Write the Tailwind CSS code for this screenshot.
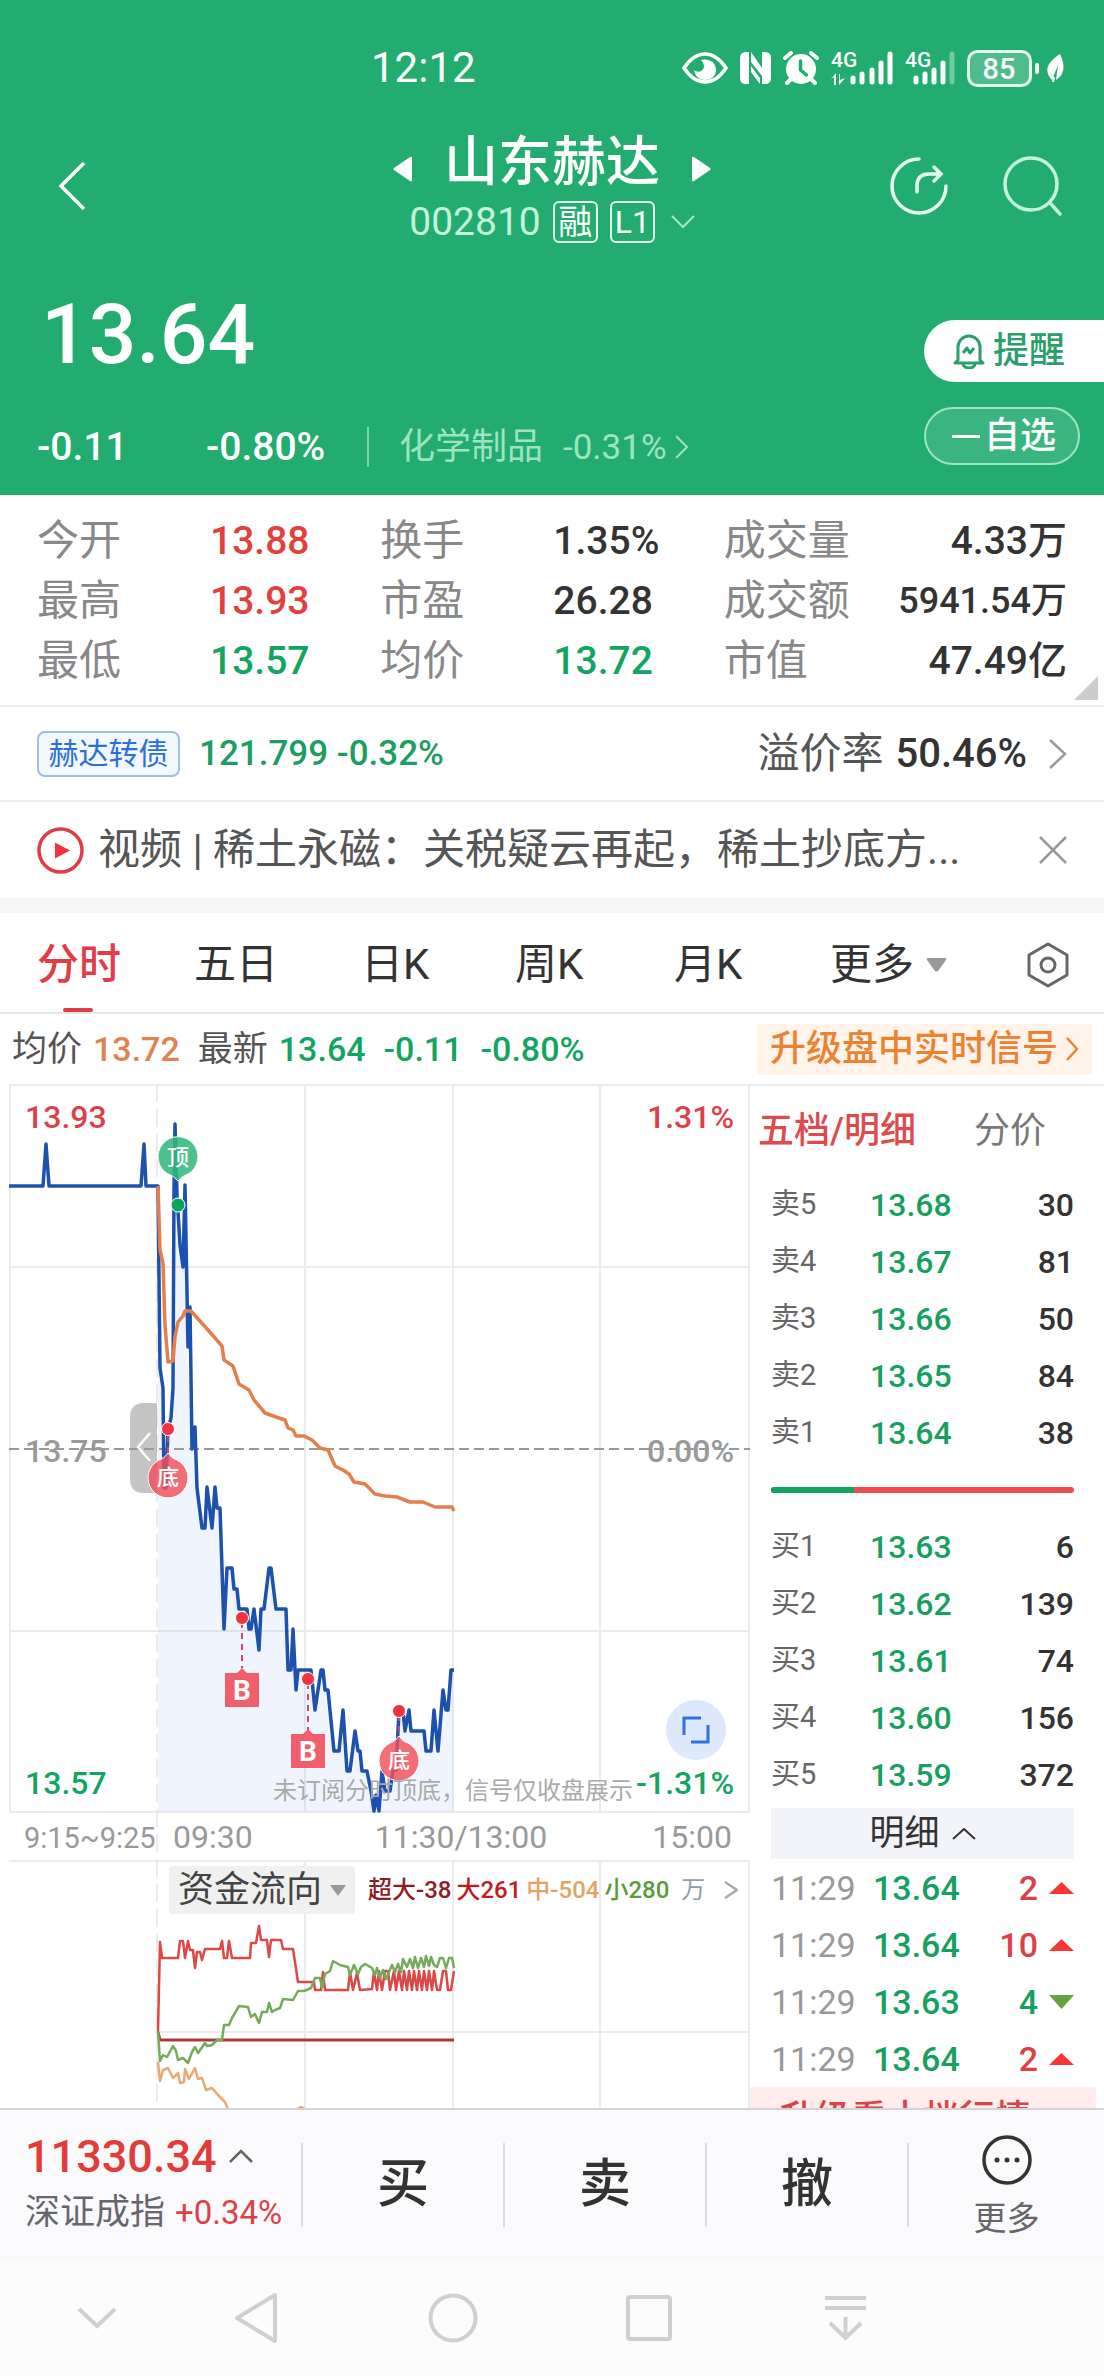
<!DOCTYPE html>
<html lang="zh-CN">
<head>
<meta charset="utf-8">
<meta name="viewport" content="width=device-width, initial-scale=1">
<title>山东赫达 002810</title>
<script src="https://cdn.jsdelivr.net/npm/@tailwindcss/browser@4"></script>
</head>
<body class="min-h-screen bg-[#fcfcfd] font-['Roboto','Noto_Sans_CJK_SC',sans-serif] leading-none text-[#333] whitespace-nowrap">

<header class="bg-[#22ac6f] text-white">
  <!-- system status -->
  <div class="flex h-[130px] items-center justify-between pt-[6px] pr-10 pl-[371px]">
    <span class="text-[42px]">12:12</span>
    <div class="flex items-center gap-3">
      <svg class="h-8 w-[46px]" viewBox="0 0 46 32" fill="none"><path d="M2 16C8 7 15 2 23 2s15 5 21 14c-6 9-13 14-21 14S8 25 2 16Z" stroke="#fff" stroke-width="3.5"/><path d="M19 8c6-2 15 1 15 10 0 6-5 10-11 10s-10-4-11-10c3 3 9 2 10-3 0-3-1-5-3-7Z" fill="#fff"/></svg>
      <svg class="h-8 w-[31px]" viewBox="0 0 31 32"><path fill="#fff" d="M6 0h3v32H6q-6 0-6-6V6q0-6 6-6ZM25 32h-3V0h3q6 0 6 6v20q0 6-6 6ZM11 0l11 16v8L11 10ZM11 14l9 12v6L11 20Z"/></svg>
      <svg class="h-[34px] w-9" viewBox="0 0 36 34" fill="none" stroke="#fff" stroke-linecap="round"><circle cx="18" cy="18" r="15" fill="#fff" stroke="none"/><path stroke-width="4" d="M2 7l6-5M34 7l-6-5M8 28l-4 4M28 28l4 4"/><path stroke="#22ac6f" stroke-width="3.5" d="M17.500 10v9l6 5"/></svg>
      <svg class="h-9 w-[62px]" viewBox="0 0 62 36" fill="#fff"><text x="0" y="17" font-size="21" font-weight="500">4G</text><path d="M3 35V27l-3 2 5-6v12ZM9 24v6l5-2-6 7V24Z"/><g stroke="#fff" stroke-width="5" stroke-linecap="round"><path d="M22 28v4M31 24v8M41 20v12M50 13v19M59 4v28"/></g></svg>
      <svg class="h-9 w-[50px]" viewBox="0 0 50 36" fill="#fff"><text x="0" y="17" font-size="21" font-weight="500">4G</text><g stroke="#fff" stroke-width="5" stroke-linecap="round"><path d="M11 28v4M20 24v8M29 20v12M38 13v19"/><path stroke="#6fcaa0" d="M47 4v28"/></g></svg>
      <svg class="h-[37px] w-[72px]" viewBox="0 0 72 37"><rect x="1.500" y="1.500" width="62" height="34" rx="9" fill="#4fbd8b" stroke="#e4f8ee" stroke-width="3"/><rect x="68" y="13" width="4" height="11" rx="2" fill="#fff"/><text x="32" y="29" text-anchor="middle" font-size="29" font-weight="500" fill="#fff">85</text></svg>
      <svg class="-ml-[5px] h-7 w-[18px]" viewBox="0 0 18 28" fill="#fff"><path d="M14 0c6 12 4 21-4 26l2-15-6 15C-2 18 0 9 14 0Z"/><path d="M7 22l-1 6h2l1-4Z"/></svg>
    </div>
  </div>

  <!-- title bar -->
  <div class="flex h-[122px] justify-between">
    <button class="flex h-[112px] w-[215px] items-center pl-[58px]" aria-label="返回"><svg class="h-12 w-7" viewBox="0 0 28 48" fill="none" stroke="#fff" stroke-width="3.500"><path d="M26 1L3 24l23 23"/></svg></button>
    <div class="flex w-[320px] flex-col items-center pt-[3px]">
      <div class="flex h-[60px] items-center gap-8">
        <button aria-label="上一只"><svg class="mt-3 h-[26px] w-[19px]" viewBox="0 0 19 26"><path fill="#fff" d="M19 2v22q0 2-2 1L1 14q-1-1 0-2L17 1q2-1 2 1Z"/></svg></button>
        <h1 class="text-[54px] font-medium">山东赫达</h1>
        <button aria-label="下一只"><svg class="mt-3 h-[26px] w-[19px]" viewBox="0 0 19 26"><path fill="#fff" d="M0 2v22q0 2 2 1l16-11q1-1 0-2L2 1q-2-1-2 1Z"/></svg></button>
      </div>
      <div class="flex h-[58px] items-center gap-3">
        <span class="text-[39px] text-[#c5f2da]">002810</span>
        <span class="flex h-[42px] w-[45px] items-center justify-center rounded-md border-2 border-[#e4f8ee] text-[34px]">融</span>
        <span class="flex h-[42px] w-[45px] items-center justify-center rounded-md border-2 border-[#e4f8ee] text-[32px]">L1</span>
        <svg class="ml-1 h-[14px] w-6" viewBox="0 0 24 14" fill="none" stroke="#a5e6c5" stroke-width="2"><path d="M1 1l11 11L23 1"/></svg>
      </div>
    </div>
    <div class="flex h-[112px] w-[215px] items-center gap-[54px]">
      <button aria-label="分享"><svg class="h-[60px] w-[60px]" viewBox="0 0 60 60" fill="none" stroke="#e8fbf1" stroke-width="3.500" stroke-linecap="round"><path d="M30 3a27 27 0 1 0 27 27M28 36v-6q0-12 12-12h12M45 11l7 7-7 7"/></svg></button>
      <button aria-label="搜索"><svg class="h-[60px] w-[60px]" viewBox="0 0 60 60" fill="none" stroke="#c5f2da" stroke-width="3.500" stroke-linecap="round"><circle cx="28" cy="28" r="26"/><path d="M48 48l9 10"/></svg></button>
    </div>
  </div>

  <!-- last price -->
  <div class="flex h-[243px] justify-between">
    <div class="pt-5 pl-[37px]">
      <div class="flex h-[126px] items-center pl-1 text-[84px] font-medium">13.64</div>
      <div class="flex h-[98px] items-center text-[39px] font-medium">
        <span class="w-[169px]">-0.11</span>
        <span class="w-[161px]">-0.80%</span>
        <span class="mr-[30px] h-10 w-[2px] bg-[#7fd3ab]"></span>
        <a href="#" class="flex items-center font-normal text-[#9de3c0]">
          <span class="mr-5 text-[36px]">化学制品</span><span class="mr-2 text-[35px]">-0.31%</span>
          <svg class="h-6 w-[14px]" viewBox="0 0 14 24" fill="none" stroke="#9de3c0" stroke-width="2"><path d="M1 1l11 11L1 23"/></svg>
        </a>
      </div>
    </div>
    <div class="flex w-[180px] flex-col gap-[25px] pt-[68px]">
      <button class="flex h-[62px] items-center gap-2 rounded-l-full bg-white pl-[29px] text-[36px] font-medium text-[#2a9f6c]">
        <svg class="h-[35px] w-8" viewBox="0 0 32 35" fill="none" stroke="#2a9f6c" stroke-width="3" stroke-linejoin="round"><path d="M5 26V13a11 11 0 0 1 22 0v13l3 3H2l3-3ZM10 30a6 4 0 0 0 12 0M10 19l4-5 3 5 4-5"/></svg>提醒</button>
      <button class="flex h-[58px] w-[156px] items-center gap-1 rounded-full border-2 border-[#9de3c0] bg-[#3bb57f] pl-[26px] text-[36px] font-medium"><span class="h-[3px] w-7 bg-white"></span>自选</button>
    </div>
  </div>
</header>

<main class="bg-white">
  <!-- key figures -->
  <section class="relative border-b-2 border-[#ececec] px-[37px] pt-4 pb-[14px]">
    <dl class="grid grid-cols-3 text-[39px] *:flex *:h-[60px] *:items-center">
      <div><dt class="w-[173px] text-[42px] text-[#888]">今开</dt><dd class="font-medium text-[#e2403c]">13.88</dd></div>
      <div><dt class="w-[173px] text-[42px] text-[#888]">换手</dt><dd class="font-medium">1.35%</dd></div>
      <div class="justify-between"><dt class="text-[42px] text-[#888]">成交量</dt><dd class="font-medium">4.33万</dd></div>
      <div><dt class="w-[173px] text-[42px] text-[#888]">最高</dt><dd class="font-medium text-[#e2403c]">13.93</dd></div>
      <div><dt class="w-[173px] text-[42px] text-[#888]">市盈</dt><dd class="font-medium">26.28</dd></div>
      <div class="justify-between"><dt class="text-[42px] text-[#888]">成交额</dt><dd class="text-[36px] font-medium">5941.54万</dd></div>
      <div><dt class="w-[173px] text-[42px] text-[#888]">最低</dt><dd class="font-medium text-[#12a561]">13.57</dd></div>
      <div><dt class="w-[173px] text-[42px] text-[#888]">均价</dt><dd class="font-medium text-[#12a561]">13.72</dd></div>
      <div class="justify-between"><dt class="text-[42px] text-[#888]">市值</dt><dd class="font-medium">47.49亿</dd></div>
    </dl>
    <svg class="absolute right-[6px] bottom-[5px] h-6 w-6" viewBox="0 0 24 24"><path fill="#ccc" d="M24 0v24H0Z"/></svg>
  </section>

  <!-- convertible bond -->
  <a href="#" class="flex h-[95px] items-center border-b-2 border-[#ececec] px-[37px]">
    <span class="mr-[19px] flex h-[46px] w-[143px] items-center justify-center rounded-lg border-2 border-[#9dbdec] bg-[#f3f8ff] text-[30px] text-[#2b6fdb]">赫达转债</span>
    <span class="text-[35px] font-medium text-[#1c9e63]">121.799 -0.32%</span>
    <span class="mr-3 ml-auto text-[42px] text-[#555]">溢价率</span>
    <span class="mr-[22px] text-[40px] font-medium">50.46%</span>
    <svg class="h-[30px] w-[18px]" viewBox="0 0 18 30" fill="none" stroke="#999" stroke-width="2.500"><path d="M1 1l15 14L1 29"/></svg>
  </a>

  <!-- news -->
  <div class="flex h-24 items-center px-[37px]">
    <svg class="mr-[14px] h-[47px] w-[47px] shrink-0" viewBox="0 0 47 47"><circle cx="23.500" cy="23.500" r="21.500" fill="none" stroke="#e03c46" stroke-width="3.500"/><path fill="#f5333f" d="M18 15.500v16l15-8Z"/></svg>
    <a href="#" class="text-[42px] text-[#555]">视频 | 稀土永磁：关税疑云再起，稀土抄底方...</a>
    <button class="ml-auto" aria-label="关闭"><svg class="h-7 w-7" viewBox="0 0 28 28" stroke="#999" stroke-width="2.500"><path d="M1 1l26 26M27 1L1 27"/></svg></button>
  </div>
  <div class="h-[15px] bg-[#f7f7f7]"></div>

  <!-- period tabs -->
  <nav class="grid h-[101px] grid-cols-[157px_167px_154px_159px_156px_1fr_auto] items-center border-b-2 border-[#e6e6e6] pt-1 pr-[35px] pl-[37px] text-left text-[42px]">
    <button class="relative h-full w-[84px] text-left font-medium text-[#df3d47]">分时<span class="absolute bottom-0 left-[26px] h-1 w-[30px] rounded bg-[#df3d47]"></span></button>
    <button class="text-left">五日</button>
    <button class="text-left">日K</button>
    <button class="text-left">周K</button>
    <button class="text-left">月K</button>
    <button class="flex items-center gap-3">更多<svg class="h-[14px] w-[21px]" viewBox="0 0 21 14"><path fill="#999" d="M2 0h17q2 0 1 2l-8 11q-1.500 1-3 0L1 2Q0 0 2 0Z"/></svg></button>
    <button aria-label="设置"><svg class="h-[46px] w-[42px]" viewBox="0 0 42 46" fill="none" stroke="#666" stroke-width="3"><path stroke-linejoin="round" d="M21 2l19 11v20L21 44 2 33V13Z"/><circle cx="21" cy="23" r="7"/></svg></button>
  </nav>

  <!-- chart legend -->
  <div class="flex h-[70px] items-center pr-3 pl-[12px] text-[34px] font-medium">
    <span class="mr-[11px] text-[35px] font-normal text-[#555]">均价</span><span class="mr-[18px] text-[#df8350]">13.72</span>
    <span class="mr-[11px] text-[35px] font-normal text-[#555]">最新</span><span class="mr-[18px] text-[#12a561]">13.64</span>
    <span class="mr-[18px] text-[#12a561]">-0.11</span><span class="text-[#12a561]">-0.80%</span>
    <button class="ml-auto flex h-[51px] items-center gap-2 rounded bg-[#fff3ea] px-[13px] text-[36px] text-[#ec8230]">升级盘中实时信号<svg class="h-6 w-[13px]" viewBox="0 0 13 24" fill="none" stroke="#ec8230" stroke-width="2.500"><path d="M1 1l10 11L1 23"/></svg></button>
  </div>

  <div class="flex">
    <!-- charts -->
    <div class="relative min-w-0 flex-1">
      <svg class="block w-full" viewBox="0 1084 750 1024" fill="none">
        <g stroke="#ebebeb" stroke-width="2">
          <path d="M9 1085H750M9 1267H749M9 1631H749M9 1812H750M9 1861H750M157 2032H749"/>
          <path d="M10 1084V1812M305 1084V1812M453 1084V1812M600 1084V1812M749 1084V1812M305 1861V2108M453 1861V2108M600 1861V2108M749 1861V2108"/>
          <path stroke-dasharray="18 7" d="M157 1084V2108"/>
        </g>
        <path fill="#2563eb" fill-opacity=".07" d="M158 1186L160 1368 163 1388 166 1488 173 1388 175 1124 182 1267 185 1185 187 1347 191 1449 195 1427 197 1488 202 1528 205 1528 207 1487 212 1528 215 1487 217 1508 220 1508 224 1629 227 1568 232 1568 237 1589 239 1609 247 1609 249 1629 254 1609 259 1650 261 1609 264 1609 269 1568 271 1568 276 1609 286 1609 288 1670 293 1629 296 1690 298 1670 311 1670 315 1710 321 1670 328 1690 334 1751 339 1751 343 1710 347 1771 355 1731 360 1751 362 1771 367 1771 374 1811 379 1811 382 1771 390 1791 396 1770 399 1711 405 1731 424 1731 426 1751 431 1751 434 1710 438 1751 443 1690 448 1710 451 1670 453 1670V1812H158Z"/>
        <path stroke="#999" stroke-width="2" stroke-dasharray="10 5" d="M9 1449H750"/>
        <g font-size="32" font-weight="500">
          <text x="25" y="1128" fill="#dc4149">13.93</text>
          <text x="734" y="1128" fill="#dc4149" text-anchor="end">1.31%</text>
          <text x="25" y="1462" fill="#999">13.75</text>
          <text x="734" y="1462" fill="#999" text-anchor="end">0.00%</text>
          <text x="25" y="1794" fill="#12a561">13.57</text>
          <text x="734" y="1794" fill="#12a561" text-anchor="end">-1.31%</text>
        </g>
        <g stroke="#1c51ad" stroke-width="3.500" stroke-linejoin="round">
          <path d="M9 1186H43L46 1144 49 1186H141L144 1144 146 1186H158L160 1368 163 1388 164 1488H166L168 1430 171 1418 173 1388 174 1190 175 1124 177 1195 180 1245 183 1267 185 1185 188 1347 190 1307 192 1449 195 1427 197 1488 202 1528H205L207 1487 212 1528 215 1487 217 1508H220L224 1629 227 1568H232L234 1589H237L239 1609H247L249 1629H251L254 1609 259 1650 261 1609H264L269 1568H271L276 1609H286L288 1670H291L293 1629 296 1690 298 1670H311L315 1710 321 1670H323L325 1690H328L334 1751H339L343 1710 347 1771H350L355 1731 358 1751H360L362 1771H367L371 1791 374 1811 376 1795 379 1811 382 1771 385 1791H390L393 1770H396L399 1711H403L405 1731 409 1710 411 1731H424L426 1751H431L434 1710 438 1751 443 1690 446 1710H448L451 1670H454"/>
        </g>
        <path stroke="#e47f4c" stroke-width="3.500" stroke-linejoin="round" d="M158 1186L160 1250 163 1263 165 1325 168 1362 173 1361 175 1337 178 1322 183 1316 185 1311H191L208 1330 222 1346 224 1360 233 1366 239 1384 249 1390 254 1400 265 1413 276 1417 285 1420 288 1428 293 1430 296 1436 304 1436 312 1440 320 1448 328 1450 335 1466 343 1470 349 1474 354 1482 365 1484 375 1494 385 1496 397 1497 410 1502H423L435 1507H452L454 1511"/>
        <!-- pull-out handle -->
        <path fill="#999" fill-opacity=".58" d="M157 1403H144Q130 1403 130 1417V1479Q130 1493 144 1493H157Z"/>
        <path stroke="#fff" stroke-width="2.500" d="M150 1433l-12 14 12 14"/>
        <!-- signals -->
        <g stroke="#cf4763" stroke-width="2" stroke-dasharray="6 5"><path d="M168 1436V1455M242 1622V1668M308 1683V1730M399 1715V1738"/></g>
        <path fill="#33b87c" fill-opacity=".87" stroke="#fff" d="M178 1181Q174 1176 168 1174A20 20 0 1 1 188 1174Q182 1176 178 1181Z"/>
        <path fill="#f0505c" fill-opacity=".82" stroke="#fff" d="M168 1453Q172 1459 177 1460A20 20 0 1 1 159 1460Q164 1459 168 1453Z"/>
        <path fill="#f0505c" fill-opacity=".82" stroke="#fff" d="M399 1736Q403 1742 408 1743A20 20 0 1 1 390 1743Q395 1742 399 1736Z"/>
        <path fill="#f05f6b" d="M242 1668l5 5h12v34h-34v-34h12ZM308 1729l5 5h12v34h-34v-34h12Z"/>
        <g stroke="#fff"><circle cx="178" cy="1205" r="7" fill="#0ba55c"/><g fill="#ef3340"><circle cx="168" cy="1429" r="6.500"/><circle cx="242" cy="1618" r="6.500"/><circle cx="308" cy="1679" r="6.500"/><circle cx="399" cy="1711" r="6.500"/></g></g>
        <g fill="#fff" text-anchor="middle" font-size="22" font-weight="500">
          <text x="178" y="1165">顶</text><text x="168" y="1485">底</text><text x="399" y="1768">底</text>
          <text x="242" y="1700" font-size="28" font-weight="700">B</text><text x="308" y="1761" font-size="28" font-weight="700">B</text>
        </g>
        <text x="273" y="1799" font-size="24" fill="#aaa">未订阅分时顶底，信号仅收盘展示</text>
        <g font-size="32" fill="#999">
          <text x="24" y="1848" font-size="29">9:15~9:25</text><text x="173" y="1848">09:30</text>
          <text x="461" y="1848" text-anchor="middle">11:30/13:00</text><text x="732" y="1848" text-anchor="end">15:00</text>
        </g>
        <!-- money flow -->
        <g stroke-width="2.500" stroke-linejoin="round">
          <path stroke="#a93b3e" stroke-width="3" d="M158 2032L160 2040H454"/>
          <path stroke="#e8a973" d="M158 2062L160 2081 163 2070 168 2068 173 2078 178 2073 180 2083 184 2082 185 2069 189 2079 195 2068 198 2079 202 2078 206 2090 212 2088 218 2095 221 2098 225 2102 228 2109M297 2109L301 2107 305 2109"/>
          <path stroke="#dc4747" d="M158 2031L160 1942 162 1958H178L180 1941H183L185 1958 188 1941 190 1950H193L195 1968 197 1952H200L202 1960 205 1949H220L222 1941 224 1958H227L229 1941 232 1958H250L251 1943H256L259 1926 261 1940H267L269 1957 271 1940H281L283 1949H293L298 1982H314L315 1990H321L323 1972 325 1990H348L350 1972 353 1990 357 1973 360 1990 372 1989 374 1972 377 1990 379 1971 382 1990 385 1971H388L390 1990 394 1971 396 1990 399 1971 402 1990 404 1971 407 1990 409 1971 412 1990 414 1971 417 1990 419 1971 422 1990 424 1971 427 1990 429 1971 432 1990 434 1971 437 1990H440L443 1971H446L448 1990H451L454 1971"/>
          <path stroke="#76aa5a" d="M158 2031L160 2061 163 2055 167 2057 173 2046 176 2051 178 2060 183 2058 188 2063 192 2052 195 2047 198 2053 205 2043 207 2046 212 2045 217 2040 222 2040 224 2025 229 2025 232 2018 239 2006 248 2007 251 2017 255 2014 259 2023 262 2012 267 2012 269 2003 272 2012 275 2010 280 2008 283 1999 293 2000 298 1991 304 1991 311 1988 315 1978H320L322 1988 325 1974 330 1971 333 1961 340 1965 348 1967 350 1975 354 1965 358 1974 361 1967 365 1964 372 1968 375 1975 377 1968 380 1978 383 1970 386 1979 392 1965 395 1972 398 1964 401 1972 403 1959 407 1967 410 1959 413 1968 415 1957 418 1968 421 1958 424 1967 426 1956 429 1966 431 1957 434 1965 437 1967 440 1958H443L446 1968 449 1958H452L454 1968"/>
        </g>
      </svg>
      <button class="absolute right-6 bottom-[348px] flex h-[60px] w-[60px] items-center justify-center rounded-full bg-[#dde8fc]" aria-label="全屏"><svg class="h-7 w-7" viewBox="0 0 28 28" fill="none" stroke="#2f72e0" stroke-width="3"><path d="M19 2H2v17M9 26h17V9"/></svg></button>
      <div class="absolute top-[782px] left-[169px] flex h-12 items-center gap-[5px] text-[24px] font-medium">
        <button class="mr-2 flex h-12 w-[186px] items-center justify-center gap-2 rounded bg-[#f0f0f0] text-[36px] font-normal text-[#444]">资金流向<svg class="h-[11px] w-4" viewBox="0 0 16 11"><path fill="#999" d="M0 0h16L8 11Z"/></svg></button>
        <span class="text-[#8f1d1f]">超大-38</span><span class="text-[#c4191d]">大261</span><span class="text-[#e6a262]">中-504</span><span class="text-[#5c9a3c]">小280</span>
        <span class="ml-[7px] font-normal text-[#8b9eae]">万</span>
        <svg class="ml-[14px] h-[18px] w-[14px]" viewBox="0 0 14 18" fill="none" stroke="#aaa" stroke-width="2.500"><path d="M1 1l12 8-12 8"/></svg>
      </div>
    </div>

    <!-- order book -->
    <aside class="h-[1024px] w-[354px] shrink-0 overflow-hidden border-t-2 border-[#ebebeb]">
      <div class="flex h-[90px] items-center gap-[58px] pl-2 text-[36px]">
        <button class="font-medium text-[#df4a4d]">五档/明细</button><button class="text-[#777]">分价</button>
      </div>
      <table class="ml-[21px] w-[303px] text-[32px] [&_td]:font-medium [&_td:nth-child(2)]:w-[120px] [&_td:nth-child(2)]:text-[#16a05f] [&_td:nth-child(3)]:text-right [&_th]:w-[99px] [&_th]:text-left [&_th]:text-[29px] [&_th]:font-normal [&_th]:text-[#666] [&_tr]:h-[57px]">
        <tr><th>卖5</th><td>13.68</td><td>30</td></tr>
        <tr><th>卖4</th><td>13.67</td><td>81</td></tr>
        <tr><th>卖3</th><td>13.66</td><td>50</td></tr>
        <tr><th>卖2</th><td>13.65</td><td>84</td></tr>
        <tr><th>卖1</th><td>13.64</td><td>38</td></tr>
        <tr><td colspan="3"><div class="flex h-[6px] overflow-hidden rounded-full bg-[#ef4c50]"><span class="bg-[#0fa560]" style="width:27.3%"></span></div></td></tr>
        <tr><th>买1</th><td>13.63</td><td>6</td></tr>
        <tr><th>买2</th><td>13.62</td><td>139</td></tr>
        <tr><th>买3</th><td>13.61</td><td>74</td></tr>
        <tr><th>买4</th><td>13.60</td><td>156</td></tr>
        <tr><th>买5</th><td>13.59</td><td>372</td></tr>
      </table>
      <button class="mt-[5px] ml-[21px] flex h-[51px] w-[303px] items-center justify-center gap-3 bg-[#f3f4f9] text-[35px]">明细<svg class="h-3 w-6" viewBox="0 0 24 12" fill="none" stroke="#333" stroke-width="2"><path d="M1 11L12 1l11 10"/></svg></button>
      <table class="ml-[21px] w-[303px] text-[34px] [&_td:nth-child(1)]:w-[102px] [&_td:nth-child(1)]:text-[#999] [&_td:nth-child(2)]:font-medium [&_td:nth-child(2)]:text-[#16a05f] [&_td:nth-child(3)]:text-right [&_td:nth-child(3)]:font-medium [&_td:nth-child(4)]:w-[36px] [&_tr]:h-[57px]">
        <tr><td>11:29</td><td>13.64</td><td class="text-[#dc4149]">2</td><td><svg class="ml-auto h-3 w-[25px]" viewBox="0 0 25 12"><path fill="#f93535" d="M12.500 0L25 12H0Z"/></svg></td></tr>
        <tr><td>11:29</td><td>13.64</td><td class="text-[#dc4149]">10</td><td><svg class="ml-auto h-3 w-[25px]" viewBox="0 0 25 12"><path fill="#f93535" d="M12.500 0L25 12H0Z"/></svg></td></tr>
        <tr><td>11:29</td><td>13.63</td><td class="text-[#16a05f]">4</td><td><svg class="ml-auto h-[14px] w-[25px]" viewBox="0 0 25 14"><path fill="#66a33f" d="M12.500 14L25 0H0Z"/></svg></td></tr>
        <tr><td>11:29</td><td>13.64</td><td class="text-[#dc4149]">2</td><td><svg class="ml-auto h-3 w-[25px]" viewBox="0 0 25 12"><path fill="#f93535" d="M12.500 0L25 12H0Z"/></svg></td></tr>
      </table>
      <a href="#" class="mr-2 block bg-[#ffecec] pt-[14px] pl-[29px] text-[36px] font-medium text-[#d8434a]">升级看十档行情 ›</a>
    </aside>
  </div>
</main>

<!-- trading bar -->
<footer>
  <div class="flex h-[152px] border-t-2 border-[#d4d4d8] bg-[#fafafc]">
    <a href="#" class="w-[301px] pt-[17px] pl-[25px]">
      <span class="flex h-[58px] items-center gap-[12px] text-[45px] font-medium text-[#e23c3a]">11330.34<svg class="h-[14px] w-6" viewBox="0 0 24 14" fill="none" stroke="#666" stroke-width="2.500"><path d="M1 13L12 2l11 11"/></svg></span>
      <span class="flex h-[54px] items-center gap-[10px] text-[35px] text-[#66666e]">深证成指<span class="text-[33px] text-[#dc4149]">+0.34%</span></span>
    </a>
    <div class="my-[33px] grid flex-1 grid-cols-[202px_202px_202px_1fr] text-[52px] font-medium *:border-l-2 *:border-[#dcdce0]">
      <button>买</button><button>卖</button><button>撤</button>
      <button class="text-[33px] font-normal text-[#666]"><span class="-my-2 flex h-[100px] flex-col items-center justify-between"><svg class="h-[50px] w-[50px]" viewBox="0 0 50 50"><circle cx="25" cy="25" r="23" fill="none" stroke="#333" stroke-width="3.500"/><g fill="#333"><circle cx="15" cy="25" r="2.500"/><circle cx="25" cy="25" r="2.500"/><circle cx="35" cy="25" r="2.500"/></g></svg>更多</span></button>
    </div>
  </div>
  <!-- system navigation -->
  <div class="flex h-[116px] items-center pr-[160px] pl-[77px]">
    <button class="mr-[41px]" aria-label="收起"><svg class="h-[22px] w-[40px]" viewBox="0 0 40 22" fill="none" stroke="#d0d0d0" stroke-width="4"><path d="M2 2l18 17L38 2"/></svg></button>
    <div class="grid flex-1 grid-cols-4 place-items-center">
      <button aria-label="返回"><svg class="h-[50px] w-[44px]" viewBox="0 0 44 50" fill="none" stroke="#d0d0d0" stroke-width="4" stroke-linejoin="round"><path d="M41 2v46L3 25Z"/></svg></button>
      <button aria-label="主页"><svg class="h-[50px] w-[50px]" viewBox="0 0 50 50" fill="none" stroke="#d0d0d0" stroke-width="4"><circle cx="25" cy="25" r="22.500"/></svg></button>
      <button aria-label="最近任务"><svg class="h-[46px] w-[46px]" viewBox="0 0 46 46" fill="none" stroke="#d0d0d0" stroke-width="4"><rect x="2" y="2" width="42" height="42" rx="2"/></svg></button>
      <button aria-label="通知"><svg class="h-[46px] w-[41px]" viewBox="0 0 41 46" fill="none" stroke="#d0d0d0" stroke-width="4"><path d="M0 3h41M0 13h41M20.500 22v21M5 28l15.500 15L36 28"/></svg></button>
    </div>
  </div>
</footer>
</body>
</html>
